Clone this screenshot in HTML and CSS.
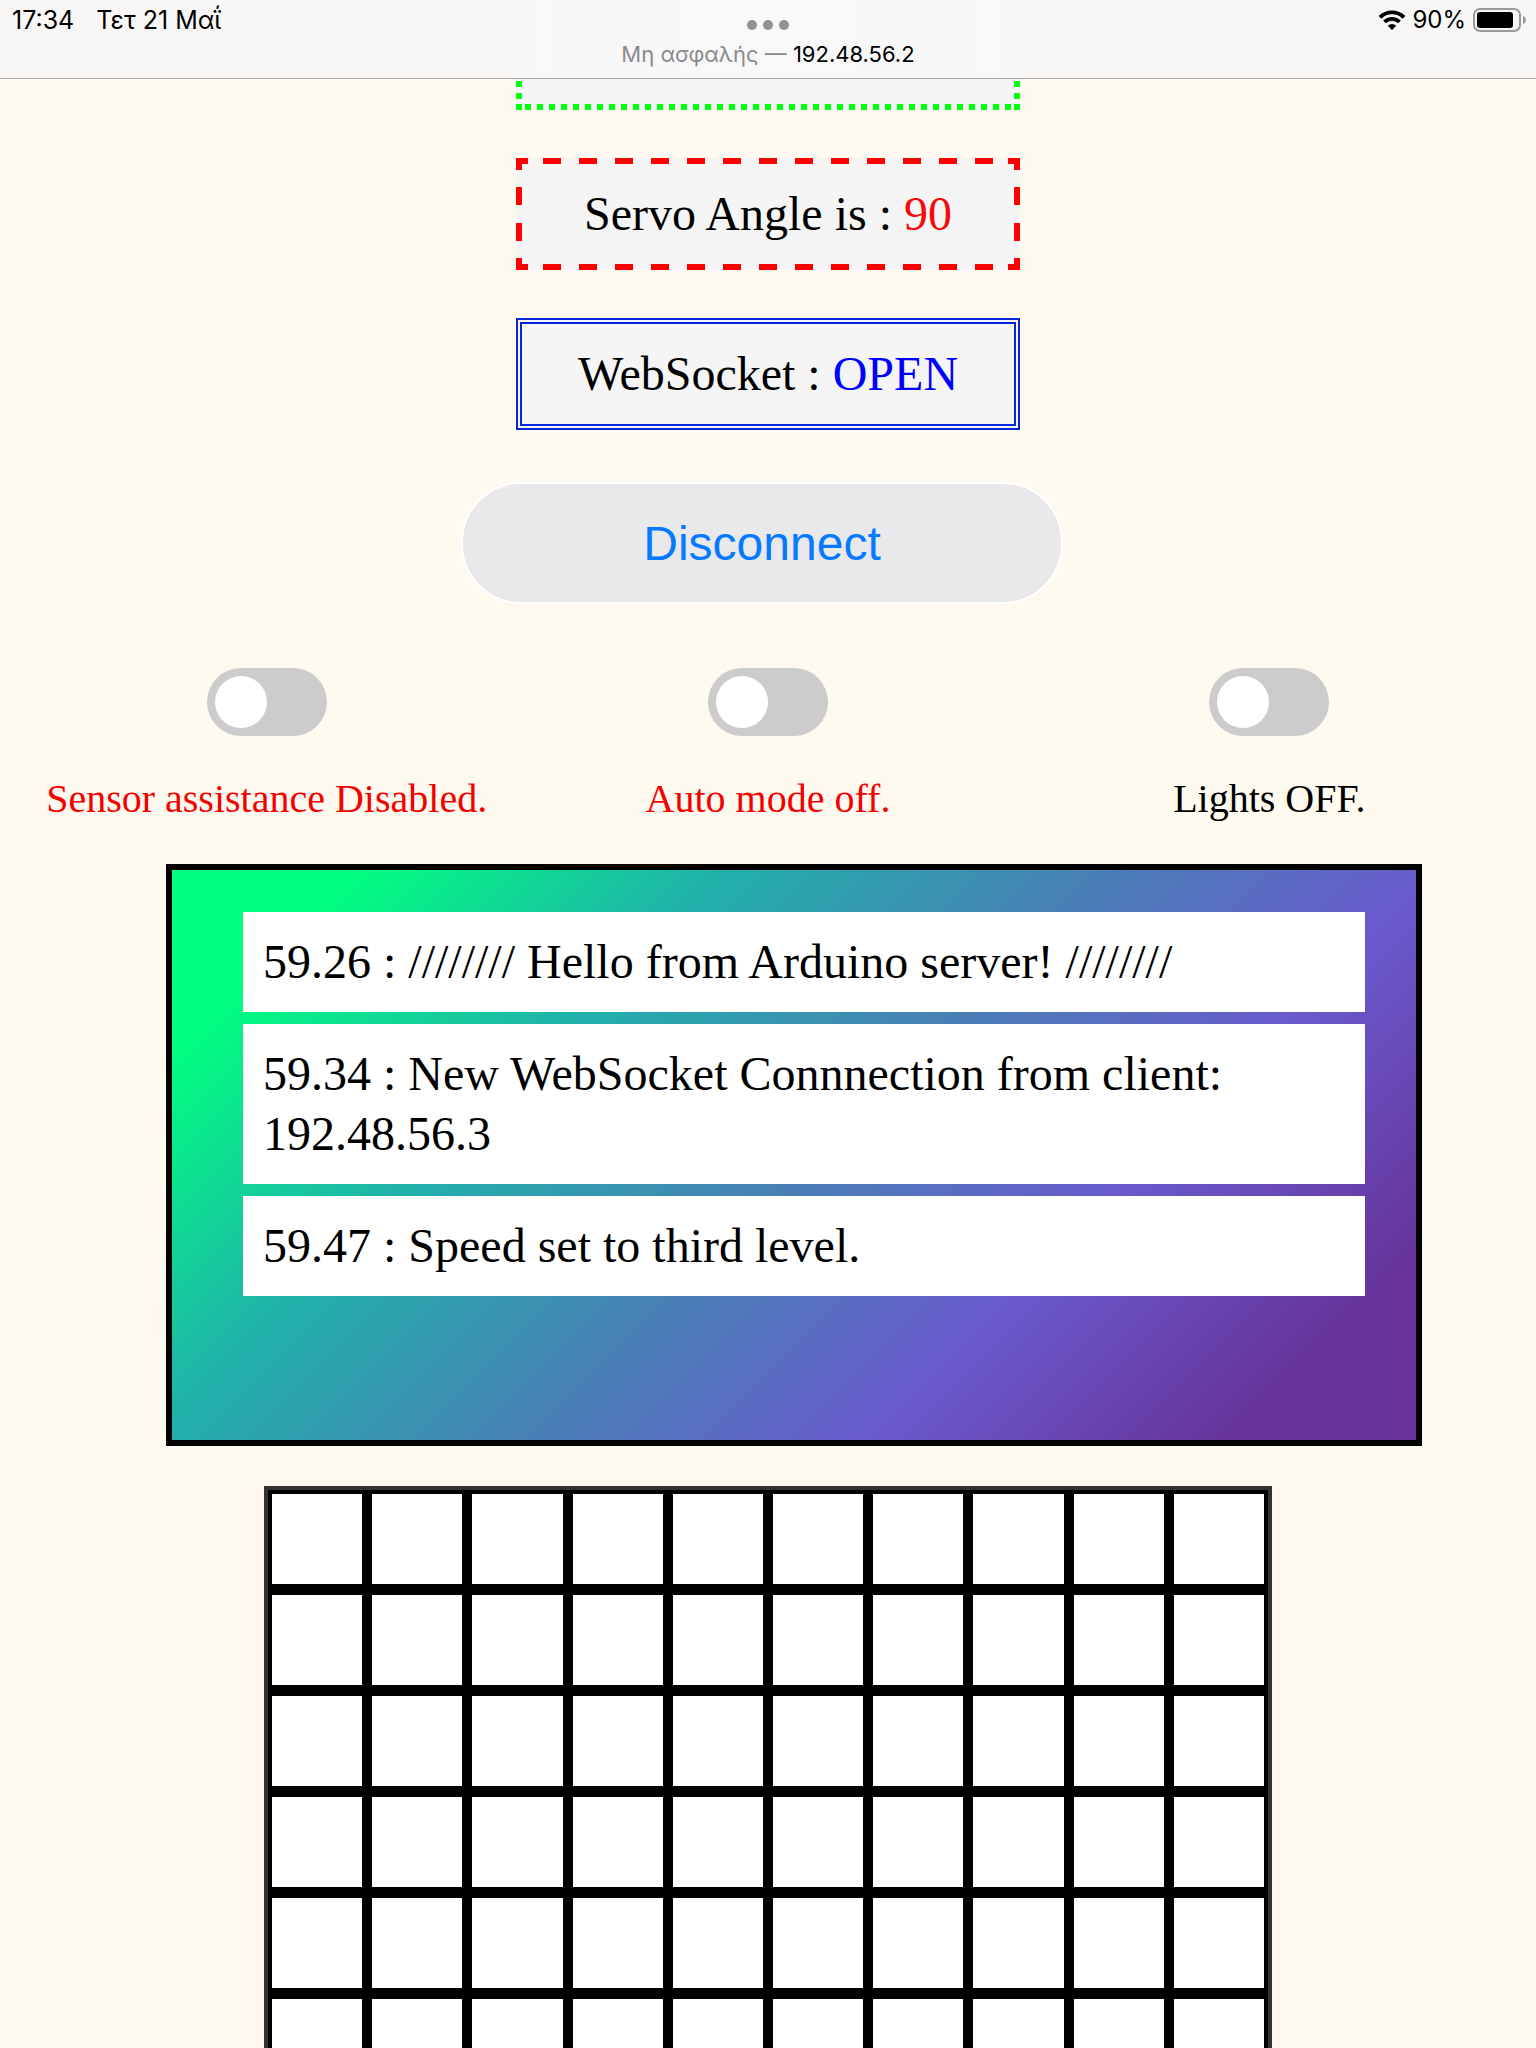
FILE: index.html
```html
<!DOCTYPE html>
<html lang="el">
<head>
<meta charset="utf-8">
<meta name="viewport" content="width=device-width, initial-scale=1">
<title>192.48.56.2</title>
<link rel="stylesheet" href="styles.css">
</head>
<body>
<header class="topbar">
  <div class="clock"><span>17:34</span><span>Τετ 21 Μαΐ</span></div>
  <div class="address">
    <div class="dots"><i></i><i></i><i></i></div>
    <p class="host"><span class="insecure">Μη ασφαλής —</span> 192.48.56.2</p>
  </div>
  <div class="status">
    <svg class="wifi" viewBox="0 0 28 20" aria-hidden="true">
      <path d="M2 7.300A17 17 0 0 1 26 7.300M6.500 12A10.600 10.600 0 0 1 21.500 12" fill="none" stroke="#000" stroke-width="3.800"/>
      <path d="M14 20l-4.200-4.300a6 6 0 0 1 8.400 0z"/>
    </svg>
    <span>90%</span>
    <svg class="battery" viewBox="0 0 54 24" aria-hidden="true">
      <rect x="2" y="1" width="46" height="22" rx="6" fill="none" stroke="#9a9a9a" stroke-width="2"/>
      <rect x="5" y="4" width="36" height="16" rx="3"/>
      <path d="M51 8q3 1 3 4t-3 4z" fill="#9a9a9a"/>
    </svg>
  </div>
</header>
<main class="page" lang="en">
  <div class="card card-dotted"></div>
  <div class="card card-dashed"><p>Servo Angle is : <span class="angle">90</span></p></div>
  <div class="card card-double"><p>WebSocket : <span class="socket">OPEN</span></p></div>
  <div class="connect"><button type="button" class="connect-button">Disconnect</button></div>
  <div class="toggles">
    <label class="toggle"><input type="checkbox" role="switch" class="switch"><span class="off">Sensor assistance Disabled.</span></label>
    <label class="toggle"><input type="checkbox" role="switch" class="switch"><span class="off">Auto mode off.</span></label>
    <label class="toggle"><input type="checkbox" role="switch" class="switch"><span>Lights OFF.</span></label>
  </div>
  <ul class="log">
    <li>59.26 : //////// Hello from Arduino server! ////////</li>
    <li>59.34 : New WebSocket Connnection from client: 192.48.56.3</li>
    <li>59.47 : Speed set to third level.</li>
  </ul>
  <div class="map">
    <div></div><div></div><div></div><div></div><div></div><div></div><div></div><div></div><div></div><div></div>
    <div></div><div></div><div></div><div></div><div></div><div></div><div></div><div></div><div></div><div></div>
    <div></div><div></div><div></div><div></div><div></div><div></div><div></div><div></div><div></div><div></div>
    <div></div><div></div><div></div><div></div><div></div><div></div><div></div><div></div><div></div><div></div>
    <div></div><div></div><div></div><div></div><div></div><div></div><div></div><div></div><div></div><div></div>
    <div></div><div></div><div></div><div></div><div></div><div></div><div></div><div></div><div></div><div></div>
  </div>
</main>
</body>
</html>
```
FILE: styles.css
```css
* {
  box-sizing: border-box;
}

body {
  margin: 0;
  height: 100vh;
  display: flex;
  flex-direction: column;
  overflow: hidden;
  background: #fffaef;
  color: #000;
  font-family: "Liberation Serif", "Times New Roman", serif;
}

p {
  margin: 0;
}

/* Browser bar */
.topbar {
  flex: none;
  display: grid;
  grid-template-columns: 1fr auto 1fr;
  align-items: start;
  padding: 4px 10px 10px;
  border-bottom: 1px solid #aaa9a6;
  background: linear-gradient(90deg, #f9f7f6 30%, #f8f8f9 50%, #f9f7f6 70%);
  font-family: Inter, "Liberation Sans", sans-serif;
  font-size: 24px;
  line-height: 32px;
}

.clock {
  display: flex;
  gap: 22px;
  padding-left: 2px;
  font-size: 25px;
}

.address {
  display: flex;
  flex-direction: column;
  align-items: center;
  gap: 10px;
  padding-top: 16px;
}

.dots {
  display: flex;
  gap: 6px;
}

.dots i {
  width: 10px;
  height: 10px;
  border-radius: 50%;
  background: #929292;
}

.host {
  font-size: 22px;
  line-height: 28px;
}

.insecure {
  color: #8a8a8d;
}

.status {
  display: flex;
  justify-content: flex-end;
  align-items: center;
  gap: 6px;
}

.wifi {
  width: 28px;
  height: 20px;
}

.battery {
  width: 54px;
  height: 24px;
}

/* Control page */
.page {
  flex: 1;
  min-height: 0;
  overflow: hidden;
  padding: 0 16px;
}

.card {
  width: 504px;
  max-width: 100%;
  height: 112px;
  margin: 0 auto 48px;
  display: flex;
  align-items: center;
  justify-content: center;
  background-color: whitesmoke;
  font-size: 48px;
  line-height: 60px;
}

/* scrolled partly under the bar */
.card-dotted {
  --c: #00ff0c;
  --row: linear-gradient(90deg, var(--c) 6px, transparent 6px calc(100% - 6px), var(--c) 0);
  --dots-x: repeating-linear-gradient(90deg, var(--c) 0 6px, transparent 6px 12px);
  --dots-y: repeating-linear-gradient(var(--c) 0 6px, transparent 6px 12px);
  margin-top: -81px;
  background-image: var(--row), var(--row), var(--dots-x), var(--dots-x), var(--dots-y), var(--dots-y);
  background-repeat: no-repeat;
  background-position: top, bottom, top, bottom, left, right;
  background-size: 100% 6px, 100% 6px, calc(100% - 18px) 6px, calc(100% - 18px) 6px, 6px calc(100% - 22px), 6px calc(100% - 22px);
}

.card-dashed {
  --c: #ff0000;
  --row: linear-gradient(90deg, var(--c) 12px, transparent 12px calc(100% - 12px), var(--c) 0);
  --col: linear-gradient(var(--c) 12px, transparent 12px calc(100% - 12px), var(--c) 0);
  --dash-x: repeating-linear-gradient(90deg, var(--c) 0 18px, transparent 18px 36px);
  --dash-y: repeating-linear-gradient(var(--c) 0 18px, transparent 18px 36px);
  background-image: var(--row), var(--row), var(--col), var(--col), var(--dash-x), var(--dash-x), var(--dash-y), var(--dash-y);
  background-repeat: no-repeat;
  background-position: top, bottom, left, right, top, bottom, left, right;
  background-size: 100% 6px, 100% 6px, 6px 100%, 6px 100%, calc(100% - 54px) 6px, calc(100% - 54px) 6px, 6px calc(100% - 58px), 6px calc(100% - 58px);
}

.card-double {
  margin-bottom: 52px;
  border: 6px double #0726dc;
}

.angle {
  color: #f40a0a;
}

.socket {
  color: #0000ff;
}

.connect {
  display: flex;
  justify-content: center;
  padding-right: 12px;
}

.connect-button {
  width: 602px;
  max-width: 100%;
  height: 122px;
  border: 2px solid #fff;
  border-radius: 60px;
  background: #e9e9eb;
  color: #067aff;
  font-family: "Liberation Sans", Arial, sans-serif;
  font-size: 48px;
}

.toggles {
  display: grid;
  grid-template-columns: repeat(3, 1fr);
  margin: 64px 0 40px;
}

.toggle {
  display: flex;
  flex-direction: column;
  align-items: center;
  gap: 38px;
  font-size: 40px;
  line-height: 50px;
}

.switch {
  appearance: none;
  width: 120px;
  height: 68px;
  margin: 0;
  padding: 8px;
  border-radius: 34px;
  background: #ccc;
}

.switch::before {
  content: "";
  display: block;
  width: 52px;
  height: 52px;
  border-radius: 50%;
  background: #fff;
}

.switch:checked::before {
  margin-left: auto;
}

.off {
  color: #f40000;
}

.log {
  min-height: 582px;
  margin: 0 98px 40px 150px;
  padding: 42px 51px 42px 71px;
  display: flex;
  flex-direction: column;
  gap: 12px;
  border: 6px solid #000;
  background: linear-gradient(135deg, springgreen 10%, lightseagreen 30%, steelblue 50%, slateblue 70%, rebeccapurple 90%);
  list-style: none;
  font-size: 48px;
  line-height: 60px;
}

.log li {
  padding: 20px;
  background: #fff;
}

.map {
  width: 1008px;
  max-width: 100%;
  margin: 0 auto;
  padding: 4px;
  display: grid;
  grid-template-columns: repeat(10, 1fr);
  grid-auto-rows: 90px;
  gap: 11px 10px;
  border: 4px solid #333;
  background: #000;
}

.map div {
  background: #fff;
}
```
